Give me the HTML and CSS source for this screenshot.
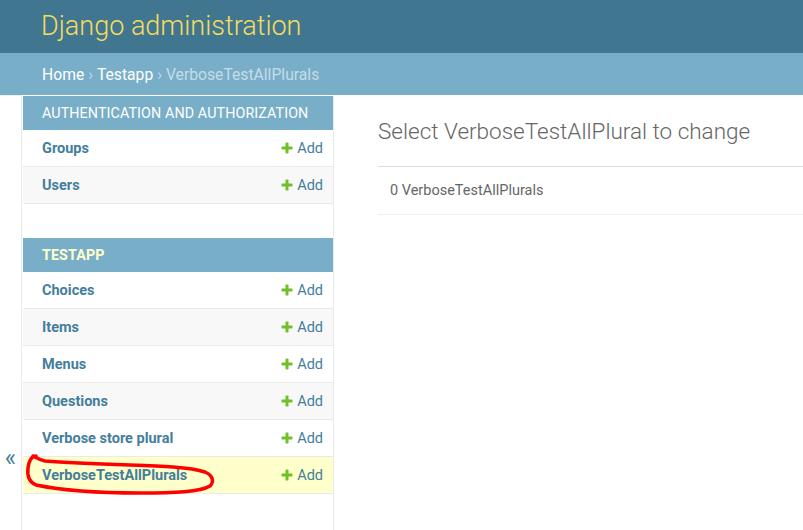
FILE: index.html
```html
<!DOCTYPE html>
<html lang="en">
<head>
<meta charset="utf-8">
<title>Select VerboseTestAllPlural to change | Django site admin</title>
<link rel="stylesheet" href="styles.css">
</head>
<body>
<div class="header">
  <h1 class="branding">Django administration</h1>
</div>
<div class="breadcrumbs">
  <a href="#">Home</a> <span class="sep">›</span> <a href="#">Testapp</a> <span class="sep">›</span> <span class="current">VerboseTestAllPlurals</span>
</div>
<div class="main">
  <button class="toggle" type="button" aria-label="Toggle navigation">«</button>
  <nav class="sidebar">
    <div class="module">
      <div class="caption"><a href="#" class="section">Authentication and Authorization</a></div>
      <div class="row"><a href="#" class="model">Groups</a><a href="#" class="addlink"><svg class="plus" viewBox="0 0 1792 1792"><path d="M1600 796v192q0 40-28 68t-68 28h-416v416q0 40-28 68t-68 28h-192q-40 0-68-28t-28-68v-416h-416q-40 0-68-28t-28-68v-192q0-40 28-68t68-28h416v-416q0-40 28-68t68-28h192q40 0 68 28t28 68v416h416q40 0 68 28t28 68z"/></svg>Add</a></div>
      <div class="row alt"><a href="#" class="model">Users</a><a href="#" class="addlink"><svg class="plus" viewBox="0 0 1792 1792"><path d="M1600 796v192q0 40-28 68t-68 28h-416v416q0 40-28 68t-68 28h-192q-40 0-68-28t-28-68v-416h-416q-40 0-68-28t-28-68v-192q0-40 28-68t68-28h416v-416q0-40 28-68t68-28h192q40 0 68 28t28 68v416h416q40 0 68 28t28 68z"/></svg>Add</a></div>
    </div>
    <div class="module current-app">
      <div class="caption"><a href="#" class="section">Testapp</a></div>
      <div class="row"><a href="#" class="model">Choices</a><a href="#" class="addlink"><svg class="plus" viewBox="0 0 1792 1792"><path d="M1600 796v192q0 40-28 68t-68 28h-416v416q0 40-28 68t-68 28h-192q-40 0-68-28t-28-68v-416h-416q-40 0-68-28t-28-68v-192q0-40 28-68t68-28h416v-416q0-40 28-68t68-28h192q40 0 68 28t28 68v416h416q40 0 68 28t28 68z"/></svg>Add</a></div>
      <div class="row alt"><a href="#" class="model">Items</a><a href="#" class="addlink"><svg class="plus" viewBox="0 0 1792 1792"><path d="M1600 796v192q0 40-28 68t-68 28h-416v416q0 40-28 68t-68 28h-192q-40 0-68-28t-28-68v-416h-416q-40 0-68-28t-28-68v-192q0-40 28-68t68-28h416v-416q0-40 28-68t68-28h192q40 0 68 28t28 68v416h416q40 0 68 28t28 68z"/></svg>Add</a></div>
      <div class="row"><a href="#" class="model">Menus</a><a href="#" class="addlink"><svg class="plus" viewBox="0 0 1792 1792"><path d="M1600 796v192q0 40-28 68t-68 28h-416v416q0 40-28 68t-68 28h-192q-40 0-68-28t-28-68v-416h-416q-40 0-68-28t-28-68v-192q0-40 28-68t68-28h416v-416q0-40 28-68t68-28h192q40 0 68 28t28 68v416h416q40 0 68 28t28 68z"/></svg>Add</a></div>
      <div class="row alt"><a href="#" class="model">Questions</a><a href="#" class="addlink"><svg class="plus" viewBox="0 0 1792 1792"><path d="M1600 796v192q0 40-28 68t-68 28h-416v416q0 40-28 68t-68 28h-192q-40 0-68-28t-28-68v-416h-416q-40 0-68-28t-28-68v-192q0-40 28-68t68-28h416v-416q0-40 28-68t68-28h192q40 0 68 28t28 68v416h416q40 0 68 28t28 68z"/></svg>Add</a></div>
      <div class="row"><a href="#" class="model">Verbose store plural</a><a href="#" class="addlink"><svg class="plus" viewBox="0 0 1792 1792"><path d="M1600 796v192q0 40-28 68t-68 28h-416v416q0 40-28 68t-68 28h-192q-40 0-68-28t-28-68v-416h-416q-40 0-68-28t-28-68v-192q0-40 28-68t68-28h416v-416q0-40 28-68t68-28h192q40 0 68 28t28 68v416h416q40 0 68 28t28 68z"/></svg>Add</a></div>
      <div class="row current-model"><a href="#" class="model">VerboseTestAllPlurals</a><a href="#" class="addlink"><svg class="plus" viewBox="0 0 1792 1792"><path d="M1600 796v192q0 40-28 68t-68 28h-416v416q0 40-28 68t-68 28h-192q-40 0-68-28t-28-68v-416h-416q-40 0-68-28t-28-68v-192q0-40 28-68t68-28h416v-416q0-40 28-68t68-28h192q40 0 68 28t28 68v416h416q40 0 68 28t28 68z"/></svg>Add</a></div>
    </div>
  </nav>
  <div class="content">
    <h1 class="title">Select VerboseTestAllPlural to change</h1>
    <div class="changelist">
      <p class="paginator">0 VerboseTestAllPlurals</p>
    </div>
  </div>
</div>
<svg class="annotation" viewBox="0 0 803 530" aria-hidden="true">
  <path d="M36 456 C 31 456, 29 461, 28 468 C 27 476, 29 482, 36 485 C 60 490, 100 493, 140 493 C 175 493, 200 492, 210 486 C 215 481, 212 475, 205 472 C 190 467, 160 466, 130 465 C 100 464, 70 463, 45 461 C 40 460, 37 458, 33 456"/>
</svg>
</body>
</html>
```
FILE: styles.css
```css
html, body {
  margin: 0;
  padding: 0;
}
body {
  font-family: Roboto, "Lucida Grande", "DejaVu Sans", Verdana, Arial, sans-serif;
  color: #333;
  background: #fff;
  position: relative;
  overflow: hidden;
}
a {
  text-decoration: none;
}
.header {
  height: 53px;
  background: #417690;
  display: flex;
  align-items: center;
  padding: 0 41px;
}
.branding {
  margin: 0;
  font-size: 27px;
  font-weight: 300;
  color: #f5dd5d;
  line-height: 1;
}
.breadcrumbs {
  height: 42px;
  box-sizing: border-box;
  background: #79aec8;
  display: flex;
  align-items: center;
  gap: 4px;
  padding: 0 42px;
  font-size: 15.7px;
  color: #c4dce8;
}
.breadcrumbs a {
  color: #fff;
}
.breadcrumbs .sep {
  color: #c4dce8;
}
.main {
  display: flex;
  min-height: 724px;
}
.toggle {
  flex: 0 0 22px;
  width: 22px;
  border: 0;
  border-right: 1px solid #eaeaea;
  background: #fff;
  color: #447e9b;
  font-size: 24px;
  font-family: Roboto, sans-serif;
  padding: 0;
  display: flex;
  align-items: center;
  justify-content: center;
  border-top: 1px solid #f0f0f0;
}
.sidebar {
  flex: 0 0 310px;
  border-top: 1px solid transparent;
  border-right: 1px solid #eaeaea;
  padding-left: 1px;
}
.module {
  margin-bottom: 34px;
}
.caption {
  height: 34px;
  background: #79aec8;
  display: flex;
  align-items: center;
  padding-left: 19px;
}
.section {
  color: #fff;
  font-size: 14.3px;
  text-transform: uppercase;
  letter-spacing: 0.1px;
}
.current-app .section {
  color: #ffc;
  font-weight: 700;
}
.row {
  height: 36px;
  border-bottom: 1px solid #eaeaea;
  display: flex;
  align-items: center;
  justify-content: space-between;
  padding: 0 10px 0 19px;
  background: #fff;
}
.row.alt {
  background: #f8f8f8;
}
.row.current-model {
  background: #ffc;
}
.model {
  color: #447e9b;
  font-weight: 700;
  font-size: 14.5px;
}
.addlink {
  color: #447e9b;
  font-size: 14.5px;
  display: flex;
  align-items: center;
  gap: 3px;
}
.plus {
  width: 14px;
  height: 14px;
  fill: #70bf2b;
}
.content {
  flex: 1;
  min-width: 0;
  padding: 23px 0 0 44px;
}
.title {
  margin: 0 0 22px;
  font-size: 22.5px;
  font-weight: 300;
  color: #666;
  line-height: 26px;
}
.changelist {
  margin-right: -40px;
}
.paginator {
  margin: 0;
  border-top: 1px solid #ddd;
  border-bottom: 1px solid #eee;
  padding: 12px 12px 11px;
  line-height: 24px;
  font-size: 14.5px;
  color: #666;
}
.annotation {
  position: absolute;
  left: 0;
  top: 0;
  width: 803px;
  height: 530px;
  pointer-events: none;
}
.annotation path {
  fill: none;
  stroke: #f00;
  stroke-width: 3.5px;
  stroke-linecap: round;
  stroke-linejoin: round;
}
```
